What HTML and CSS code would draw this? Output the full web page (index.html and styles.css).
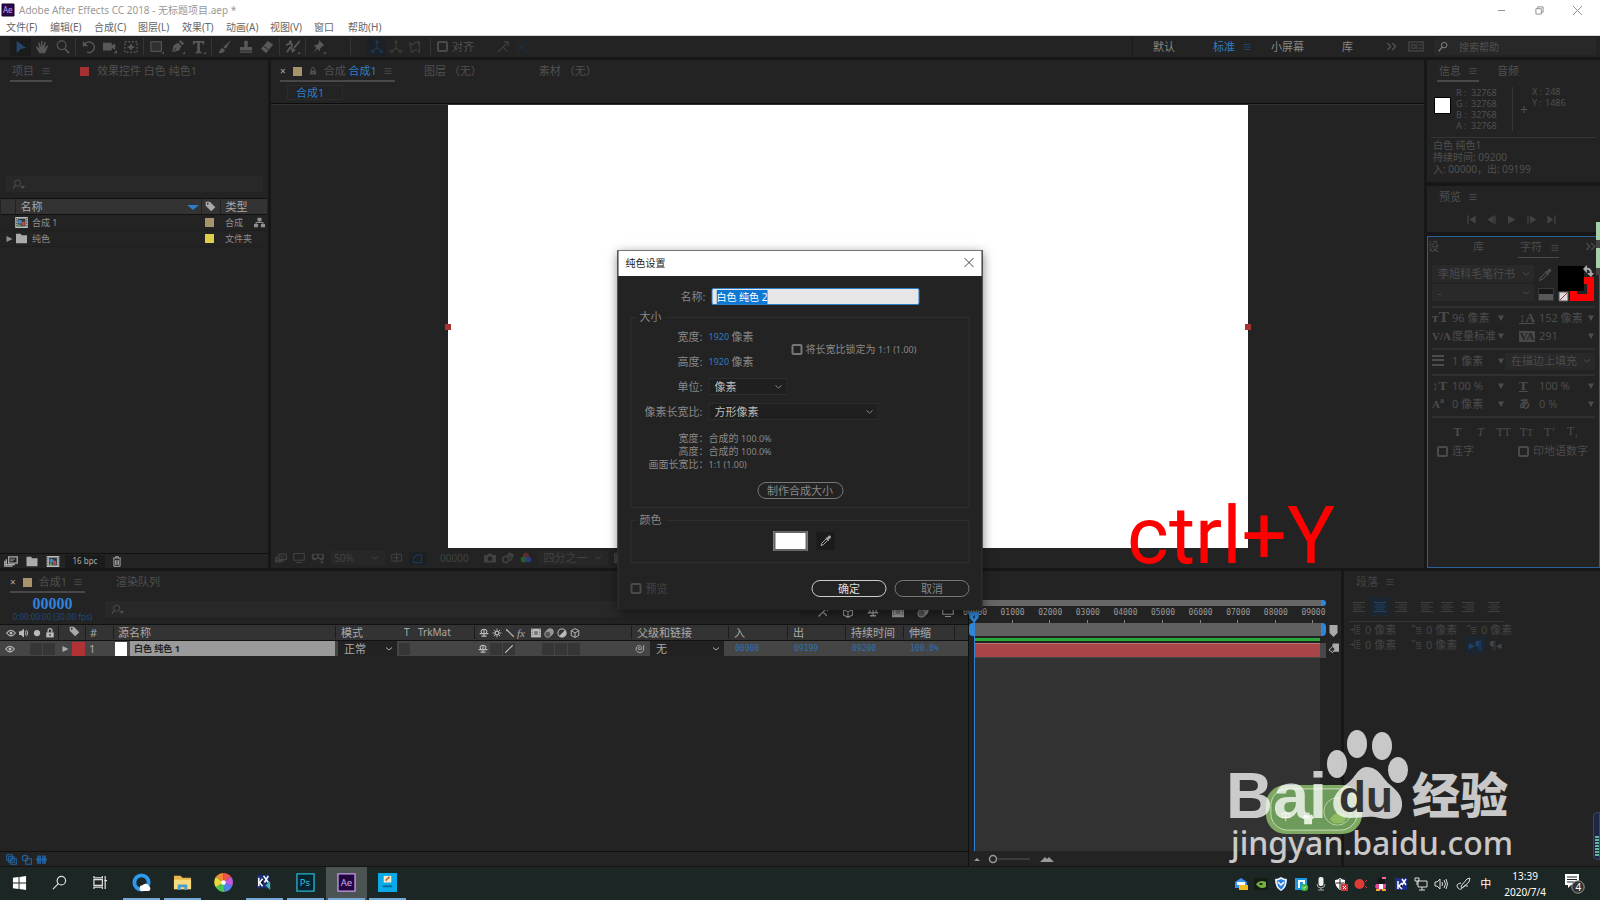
FILE: index.html
```html
<!DOCTYPE html>
<html lang="zh-CN">
<head>
<meta charset="utf-8">
<title>Adobe After Effects CC 2018 - 无标题项目.aep *</title>
<link rel="stylesheet" href="styles.css">
</head>
<body>
<svg class="defs" aria-hidden="true">
  <symbol id="burger" viewBox="0 0 16 16"><path d="M1 3h14M1 8h14M1 13h14" stroke="currentColor" stroke-width="1.6" fill="none"/></symbol>
  <symbol id="chev" viewBox="0 0 16 16"><path d="M2 5l6 5 6-5" stroke="currentColor" stroke-width="2" fill="none"/></symbol>
  <symbol id="more" viewBox="0 0 16 16"><path d="M2 3l5 5-5 5M9 3l5 5-5 5" stroke="currentColor" stroke-width="1.8" fill="none"/></symbol>
  <symbol id="tri" viewBox="0 0 16 16"><path d="M2 3h12l-6 11z" fill="currentColor"/></symbol>
  <symbol id="play" viewBox="0 0 16 16"><path d="M3 2l12 6-12 6z" fill="currentColor"/></symbol>
  <symbol id="lens" viewBox="0 0 16 16"><circle cx="9" cy="6" r="4" stroke="currentColor" stroke-width="1.4" fill="none"/><path d="M6 9l-5 6" stroke="currentColor" stroke-width="1.6"/></symbol>
  <symbol id="lensdrop" viewBox="0 0 20 16"><circle cx="8" cy="6" r="4.5" stroke="currentColor" stroke-width="1.3" fill="none"/><path d="M5 9l-4 5" stroke="currentColor" stroke-width="1.5"/><path d="M12 10h7l-3.500 4z" fill="currentColor"/></symbol>
  <symbol id="arrow" viewBox="0 0 16 16"><path d="M3 1l11 8-6 1-5 5z" fill="currentColor"/></symbol>
  <symbol id="hand" viewBox="0 0 16 16"><path d="M5 15L1 8l1.500-.5L5 10 3.500 3l1.400-.3L6.500 8 7 1h1.500l.3 7L11 2l1.400.5L11 9l3-3 1 .8L11.500 15z" fill="currentColor"/></symbol>
  <symbol id="zoom" viewBox="0 0 16 16"><circle cx="6.500" cy="6" r="5" stroke="currentColor" stroke-width="1.4" fill="none"/><path d="M10 10l5 5" stroke="currentColor" stroke-width="2"/></symbol>
  <symbol id="rotate" viewBox="0 0 16 16"><path d="M3 5a6 6 0 1 1 3 9" stroke="currentColor" stroke-width="1.7" fill="none"/><path d="M1 1v6h6z" fill="currentColor"/></symbol>
  <symbol id="camera" viewBox="0 0 16 16"><path d="M0 3h10v3l4-2v7l-4-2v3H0zM12 15h4v-4z" fill="currentColor"/></symbol>
  <symbol id="panb" viewBox="0 0 16 16"><rect x="1" y="2" width="14" height="12" stroke="currentColor" stroke-dasharray="2 2" stroke-width="1.5" fill="none"/><path d="M8 4l2 3 3 1-3 1-2 3-2-3-3-1 3-1z" fill="currentColor"/></symbol>
  <symbol id="rect" viewBox="0 0 16 16"><rect x="1" y="2" width="12" height="11" stroke="currentColor" stroke-width="1.2" fill="#303030"/><path d="M13 16h3v-3z" fill="currentColor"/></symbol>
  <symbol id="pen" viewBox="0 0 16 16"><path d="M1 14l2-8 5-3 4 4-3 5zM9 2l2-2 4 4-2 2zM13 16h3v-3z" fill="currentColor"/><path d="M2 13l4-4" stroke="#232323"/></symbol>
  <symbol id="type" viewBox="0 0 16 16"><path d="M1 1h13v4h-1.500l-.8-2H9v10l2 .6V15H4v-1.400l2-.6V3H3.300l-.8 2H1zM13 16h3v-3z" fill="currentColor"/></symbol>
  <symbol id="brush" viewBox="0 0 16 16"><path d="M15 0L9 10 6 8zM5 9l3 2.500C7 15 4 15 0 15c2-1 2-5 5-6z" fill="currentColor"/></symbol>
  <symbol id="stamp" viewBox="0 0 16 16"><path d="M6 8V4a2.300 2.300 0 1 1 4 0v4h5v4H1V8zM1 13h14v1.500H1z" fill="currentColor"/></symbol>
  <symbol id="eraser" viewBox="0 0 16 16"><path d="M1 10L9 1l6 4-8 10z" fill="currentColor"/><path d="M4 7l6 4" stroke="#232323"/></symbol>
  <symbol id="roto" viewBox="0 0 16 16"><circle cx="5" cy="2" r="1.800" fill="currentColor"/><path d="M0 6l4-2 3 1-1 4 2 5M5 8l-4 6M16 1L9 9" stroke="currentColor" stroke-width="2" fill="none"/><path d="M8 9l3 2-4 4zM13 16h3v-3z" fill="currentColor"/></symbol>
  <symbol id="pin" viewBox="0 0 16 16"><path d="M8 0l6 6-2 1-3 3v3L6 10l-5 5 4-6-3-3h3l3-3zM13 16h3v-3z" fill="currentColor"/></symbol>
  <symbol id="axis" viewBox="0 0 16 16"><path d="M8 1v8l-6 5M8 9l6 5M6 3l2-2 2 2M2 11v3h3M11 14h3v-3" stroke="currentColor" stroke-width="1.300" fill="none"/></symbol>
  <symbol id="axis2" viewBox="0 0 16 16"><path d="M2 3l3 3 3-3 5-1v12l-4-3-5 3zM2 3v3M10 2l3 4" stroke="currentColor" stroke-width="1.300" fill="none"/></symbol>
  <symbol id="snap" viewBox="0 0 16 16"><path d="M2 14l6-6 5 5M8 8l5-5M9 2h5v5" stroke="currentColor" stroke-width="1.500" fill="none"/></symbol>
  <symbol id="snap2" viewBox="0 0 16 16"><path d="M2 2l4 4M14 2l-4 4M2 14l4-4M14 14l-4-4M8 5v6M5 8h6" stroke="currentColor" stroke-width="1.500" stroke-dasharray="2 1" fill="none"/></symbol>
  <symbol id="wsicon" viewBox="0 0 18 12"><rect x="1" y="1" width="16" height="10" stroke="currentColor" stroke-width="1.800" fill="none"/><path d="M4 4h4v4H4zM10 3v6M12 4h3M12 8h3" stroke="currentColor" stroke-width="1.500" fill="none"/></symbol>
  <symbol id="lock" viewBox="0 0 16 16"><path d="M2 7h12v8H2z" fill="currentColor"/><path d="M5 7V4a3 3 0 0 1 6 0v3" stroke="currentColor" stroke-width="2" fill="none"/><circle cx="8" cy="11" r="1.400" fill="#333"/></symbol>
  <symbol id="tag" viewBox="0 0 16 16"><path d="M1 1h6l8 8-6 6-8-8z" fill="currentColor"/><circle cx="4" cy="4" r="1.300" fill="#333"/></symbol>
  <symbol id="comp" viewBox="0 0 16 14"><path d="M0 0h16v14H0z" fill="#bbb"/><path d="M3 2h10v10H3z" fill="#2c3840"/><circle cx="6" cy="6" r="2.600" fill="#4a86b8"/><path d="M8 6h4v5H8z" fill="#b85048"/><path d="M5 8l3 4H3z" fill="#63a060"/><path d="M1 2h1M1 5h1M1 8h1M1 11h1M14 2h1M14 5h1M14 8h1M14 11h1" stroke="#333" stroke-width="1.500"/></symbol>
  <symbol id="folder" viewBox="0 0 16 14"><path d="M1 1h6l1 2h7v10H1z" fill="currentColor"/></symbol>
  <symbol id="tree" viewBox="0 0 16 16"><path d="M5 1h6v5H5zM0 10h6v5H0zM10 10h6v5h-6z" fill="currentColor"/><path d="M8 6v2M3 10V8h10v2" stroke="currentColor" stroke-width="1.500" fill="none"/></symbol>
  <symbol id="footage" viewBox="0 0 18 14"><path d="M6 1h11v8H6zM3 4v7h11M1 6v7h10" stroke="currentColor" stroke-width="1.700" fill="none"/><path d="M8 4h6M8 6h4" stroke="currentColor"/></symbol>
  <symbol id="trash" viewBox="0 0 14 16"><path d="M1 3h12M5 3V1h4v2M2.500 4v11h9V4M5 6v7M7 6v7M9 6v7" stroke="currentColor" stroke-width="1.400" fill="none"/></symbol>
  <symbol id="eye" viewBox="0 0 16 12"><path d="M1 6q7-9 14 0-7 9-14 0z" stroke="currentColor" stroke-width="1.800" fill="none"/><circle cx="8" cy="6" r="2.400" fill="currentColor"/></symbol>
  <symbol id="spk" viewBox="0 0 16 16"><path d="M0 5h3l5-4v14l-5-4H0z" fill="currentColor"/><path d="M10 5q2 3 0 6M12 3q4 5 0 10" stroke="currentColor" stroke-width="1.500" fill="none"/></symbol>
  <symbol id="shy" viewBox="0 0 16 16"><path d="M3 6q1-4 5-4t5 4M1 9h14M8 1v13M4 6v3M12 6v3M4 13h8" stroke="currentColor" stroke-width="1.800" fill="none"/></symbol>
  <symbol id="sun" viewBox="0 0 16 16"><circle cx="8" cy="8" r="3" stroke="currentColor" stroke-width="2" fill="none"/><path d="M8 1v3M8 12v3M1 8h3M12 8h3M3 3l2 2M11 11l2 2M3 13l2-2M11 5l2-2" stroke="currentColor" stroke-width="1.500"/></symbol>
  <symbol id="slash" viewBox="0 0 16 16"><path d="M2 14L14 2" stroke="currentColor" stroke-width="1.800"/></symbol>
  <symbol id="bslash" viewBox="0 0 16 16"><path d="M2 2l12 12M2 3l2 2" stroke="currentColor" stroke-width="1.800"/></symbol>
  <symbol id="film" viewBox="0 0 16 16"><path d="M0 1h16v14H0z" fill="currentColor"/><path d="M2 2v12M14 2v12" stroke="#333" stroke-dasharray="2 2"/><path d="M5 5h6v6H5z" fill="#777"/></symbol>
  <symbol id="blur" viewBox="0 0 16 16"><circle cx="10" cy="6" r="5" fill="#888" stroke="currentColor"/><circle cx="8" cy="8" r="5" fill="#777" stroke="currentColor"/><circle cx="6" cy="10" r="5" fill="#555" stroke="currentColor"/></symbol>
  <symbol id="snapshot" viewBox="0 0 16 16"><circle cx="5" cy="10" r="4" stroke="currentColor" stroke-width="2" fill="none"/><path d="M6 6l4-4 5 2-4 8" stroke="currentColor" stroke-width="2" fill="none"/><circle cx="11" cy="5" r="2" fill="currentColor"/></symbol>
  <symbol id="adj" viewBox="0 0 16 16"><circle cx="8" cy="8" r="6.500" fill="#333" stroke="currentColor" stroke-width="1.600"/><path d="M12.600 3.400A6.500 6.500 0 0 1 3.400 12.600z" fill="currentColor"/></symbol>
  <symbol id="cube" viewBox="0 0 16 16"><path d="M8 1l6 3v8l-6 3-6-3V4zM2 4l6 4 6-4M8 8v7" stroke="currentColor" stroke-width="1.500" fill="none"/></symbol>
  <symbol id="spiral" viewBox="0 0 16 16"><path d="M9 8a1.500 1.500 0 1 0-2 1.500C11 11 12 8 11 6 9 2 3 4 3 9c0 6 11 7 11 0V3" stroke="currentColor" stroke-width="1.400" fill="none"/></symbol>
  <symbol id="drop" viewBox="0 0 16 16"><path d="M2 14l1-3 6-6 2 2-6 6z" stroke="currentColor" stroke-width="1.300" fill="none"/><path d="M8 4l1-1 1 1 2-3q4-1 3 3l-3 2 1 1-1 1z" fill="currentColor"/></symbol>
  <symbol id="al" viewBox="0 0 16 16"><path d="M0 2h16M0 5h11M0 8h16M0 11h11M0 14h16" stroke="currentColor" stroke-width="1.200"/></symbol>
  <symbol id="ac" viewBox="0 0 16 16"><path d="M0 2h16M3 5h10M0 8h16M3 11h10M0 14h16" stroke="currentColor" stroke-width="1.200"/></symbol>
  <symbol id="ar" viewBox="0 0 16 16"><path d="M0 2h16M5 5h11M0 8h16M5 11h11M0 14h16" stroke="currentColor" stroke-width="1.200"/></symbol>
  <symbol id="ind" viewBox="0 0 16 16"><path d="M7 1v14M9 2h6M9 5h5M9 8h6M9 11h5M9 14h6M0 8h5M3 6l2 2-2 2" stroke="currentColor" stroke-width="1.200" fill="none"/></symbol>
  <symbol id="ind2" viewBox="0 0 16 16"><path d="M0 3h6M4 1l2 2-2 2M8 5h6v3H8zM8 11h7M8 14h7" stroke="currentColor" stroke-width="1.200" fill="none"/></symbol>
  <symbol id="photo" viewBox="0 0 16 14"><path d="M0 3h4l2-2h4l2 2h4v10H0z" fill="currentColor"/><circle cx="8" cy="8" r="3" fill="#232323"/></symbol>
  <symbol id="screen" viewBox="0 0 16 14"><path d="M1 1h14v9H1zM4 13h8" stroke="currentColor" stroke-width="1.500" fill="none"/></symbol>
  <symbol id="goggle" viewBox="0 0 16 14"><path d="M1 2h14v6l-3 2-3-2H7L4 10 1 8z" fill="currentColor"/><circle cx="5" cy="5" r="2" fill="#232323"/><circle cx="11" cy="5" r="2" fill="#232323"/><path d="M10 11h5l-2.500 3z" fill="currentColor"/></symbol>
  <symbol id="gridi" viewBox="0 0 16 14"><path d="M1 2h13v9H1zM7.500 0v13M4 6.500h7" stroke="currentColor" stroke-width="1.300" fill="none"/></symbol>
</svg>

<header class="titlebar">
  <svg class="aelogo" viewBox="0 0 12 12"><path fill="#2a0a4a" stroke="#150329" d="M0 0h12v12H0z"/><text x="1" y="9" font-size="8" fill="#c9a6f5">Ae</text></svg>
  <h1>Adobe After Effects CC 2018 - 无标题项目.aep *</h1>
  <div class="winbtns">
    <button aria-label="最小化"><svg viewBox="0 0 10 10"><path d="M1 5h8"/></svg></button>
    <button aria-label="还原"><svg viewBox="0 0 10 10"><path d="M1 3h6v6H1zM3 3V1h6v6H7"/></svg></button>
    <button aria-label="关闭"><svg viewBox="0 0 10 10"><path d="M0 0l10 10M10 0L0 10"/></svg></button>
  </div>
</header>
<nav class="menubar">
  <button>文件(F)</button><button>编辑(E)</button><button>合成(C)</button><button>图层(L)</button><button>效果(T)</button><button>动画(A)</button><button>视图(V)</button><button class="narrow">窗口</button><button>帮助(H)</button>
</nav>

<div class="toolbar">
  <button class="tool on" aria-label="选取"><svg><use href="#arrow"/></svg></button>
  <button class="tool" aria-label="手形"><svg><use href="#hand"/></svg></button>
  <button class="tool" aria-label="缩放"><svg><use href="#zoom"/></svg></button><i class="sep"></i>
  <button class="tool" aria-label="旋转"><svg><use href="#rotate"/></svg></button>
  <button class="tool" aria-label="摄像机"><svg><use href="#camera"/></svg></button>
  <button class="tool" aria-label="锚点"><svg><use href="#panb"/></svg></button><i class="sep"></i>
  <button class="tool" aria-label="矩形"><svg><use href="#rect"/></svg></button>
  <button class="tool" aria-label="钢笔"><svg><use href="#pen"/></svg></button>
  <button class="tool" aria-label="文字"><svg><use href="#type"/></svg></button><i class="sep"></i>
  <button class="tool" aria-label="画笔"><svg><use href="#brush"/></svg></button>
  <button class="tool" aria-label="图章"><svg><use href="#stamp"/></svg></button>
  <button class="tool" aria-label="橡皮擦"><svg><use href="#eraser"/></svg></button><i class="sep"></i>
  <button class="tool" aria-label="Roto"><svg><use href="#roto"/></svg></button><i class="sep"></i>
  <button class="tool" aria-label="操控"><svg><use href="#pin"/></svg></button><i class="sep far"></i>
  <button class="tool axis on" aria-label="本地轴"><svg><use href="#axis"/></svg></button>
  <button class="tool dim" aria-label="世界轴"><svg><use href="#axis"/></svg></button>
  <button class="tool dim" aria-label="视图轴"><svg><use href="#axis2"/></svg></button><i class="sep wide"></i>
  <label class="check dimtext"><input type="checkbox">对齐</label>
  <button class="tool dim snap" aria-label="对齐边缘"><svg><use href="#snap"/></svg></button>
  <button class="tool dim blue" aria-label="对齐特征"><svg><use href="#snap2"/></svg></button>
  <div class="workspaces">
    <button>默认</button><button class="cur">标准 <svg class="i8"><use href="#burger"/></svg></button><button>小屏幕</button><button>库</button>
    <button aria-label="更多" class="morebtn"><svg class="i11"><use href="#more"/></svg></button>
    <svg class="wsicon"><use href="#wsicon"/></svg>
    <label class="helpsearch"><svg class="i11"><use href="#lens"/></svg><input type="search" placeholder="搜索帮助" aria-label="搜索帮助"></label>
  </div>
</div>

<main class="work">
  <div class="upper">
    <section class="panel project">
      <div class="tabs"><span class="tab active">项目<svg class="i8"><use href="#burger"/></svg></span><span class="tab fx"><i class="sw red"></i>效果控件 白色 纯色1</span></div>
      <div class="space"></div>
      <label class="search"><svg class="ld"><use href="#lensdrop"/></svg><input type="text" aria-label="搜索项目"></label>
      <table class="ptable">
        <colgroup><col class="c1"><col class="c2"><col class="c3"><col></colgroup>
        <thead><tr><th></th><th><span class="between">名称<svg class="sortarrow" viewBox="0 0 12 6"><path d="M0 1h12L6 6z" fill="#2d7cc8"/></svg></span></th><th><svg class="i11"><use href="#tag"/></svg></th><th>类型</th></tr></thead>
        <tbody>
          <tr><td></td><td><span class="nm"><svg class="pi"><use href="#comp"/></svg>合成 1</span></td><td><i class="sw tan"></i></td><td><span class="between">合成<svg class="i11"><use href="#tree"/></svg></span></td></tr>
          <tr><td><svg class="i8"><use href="#play"/></svg></td><td><span class="nm"><svg class="pi"><use href="#folder"/></svg>纯色</span></td><td><i class="sw yellow"></i></td><td>文件夹</td></tr>
        </tbody>
      </table>
      <div class="pfoot">
        <button aria-label="解释素材"><svg><use href="#footage"/></svg></button><button aria-label="新建文件夹"><svg><use href="#folder"/></svg></button><button aria-label="新建合成"><svg><use href="#comp"/></svg></button><button class="bpc">16 bpc</button><button aria-label="删除"><svg><use href="#trash"/></svg></button>
      </div>
    </section>

    <section class="panel viewer">
      <div class="tabs"><span class="tab active comp"><b>×</b><i class="sw tan"></i><svg class="i8"><use href="#lock"/></svg><span>合成 <em>合成1</em></span><svg class="i8"><use href="#burger"/></svg></span><span class="tab t2">图层 （无）</span><span class="tab t3">素材 （无）</span></div>
      <div class="crumbs"><button>合成1</button></div>
      <div class="stage"><i class="handle"></i><div class="canvas"></div><i class="handle"></i></div>
      <div class="vfoot">
        <svg class="i12"><use href="#footage"/></svg><svg class="i12"><use href="#screen"/></svg><svg class="i14"><use href="#goggle"/></svg>
        <span class="dd z">50%<svg class="i8"><use href="#chev"/></svg></span>
        <svg class="i12"><use href="#gridi"/></svg><span class="maskbtn"><svg class="i11" viewBox="0 0 16 16"><path d="M2 14V7l5-4h7v11z" stroke="currentColor" stroke-width="1.500" fill="none"/></svg></span>
        <span class="tc">00000</span>
        <svg class="i12"><use href="#photo"/></svg><svg class="i12"><use href="#snapshot"/></svg>
        <svg class="i12" viewBox="0 0 16 16"><circle cx="8" cy="5" r="4" fill="#602c2c"/><circle cx="5" cy="10" r="4" fill="#285c30"/><circle cx="11" cy="10" r="4" fill="#2a3c78"/></svg>
        <span class="dd q">四分之一<svg class="i8"><use href="#chev"/></svg></span><svg class="i12"><use href="#film"/></svg>
      </div>
    </section>

    <aside class="side">
      <section class="panel info">
        <div class="tabs"><span class="tab active">信息<svg class="i8"><use href="#burger"/></svg></span><span class="tab">音频</span></div>
        <div class="inforow"><i class="bigsw"></i>
          <dl class="rgba"><dt>R :</dt><dd>32768</dd><dt>G :</dt><dd>32768</dd><dt>B :</dt><dd>32768</dd><dt>A :</dt><dd>32768</dd></dl>
          <span class="plus">+</span><dl class="xy"><dt>X :</dt><dd>248</dd><dt>Y :</dt><dd>1486</dd></dl></div>
        <p class="infotext">白色 纯色1<br>持续时间: 09200<br>入: 00000，出: 09199</p>
      </section>
      <section class="panel preview">
        <div class="tabs"><span class="tab">预览<svg class="i8"><use href="#burger"/></svg></span></div>
        <div class="transport">
          <button aria-label="首帧"><svg viewBox="0 0 16 16"><path d="M2 2h2v12H2zM14 2v12L5 8z"/></svg></button><button aria-label="上一帧"><svg viewBox="0 0 16 16"><path d="M11 2v12L2 8zM12 2h2v12h-2z"/></svg></button><button aria-label="播放"><svg viewBox="0 0 16 16"><path d="M3 2l11 6-11 6z"/></svg></button><button aria-label="下一帧"><svg viewBox="0 0 16 16"><path d="M2 2h2v12H2zM6 2l9 6-9 6z"/></svg></button><button aria-label="末帧"><svg viewBox="0 0 16 16"><path d="M2 2l9 6-9 6zM12 2h2v12h-2z"/></svg></button>
        </div>
      </section>
      <section class="panel character">
        <div class="ctabs"><span>设</span><span class="lib">库</span><span class="act">字符<svg class="i8"><use href="#burger"/></svg></span><svg class="i11"><use href="#more"/></svg></div>
        <div class="fontbox">
          <div class="fsel"><label class="sel"><select aria-label="字体"><option>李旭科毛笔行书</option></select><svg class="i8"><use href="#chev"/></svg></label><label class="sel"><select aria-label="样式"><option>-</option></select><svg class="i8"><use href="#chev"/></svg></label></div>
          <div class="mid"><svg class="i14"><use href="#drop"/></svg><i class="bw"></i></div>
          <svg class="fillstroke" viewBox="0 0 38 38"><path d="M12 13h24v24H12zM19 20v10h10V20z" fill="#f00" fill-rule="evenodd"/><path d="M0 2h26v25H0z" fill="#000"/><path d="M1 28h9v9H1z" fill="#ddd" stroke="#555"/><path d="M2 36l7-7" stroke="#a33"/><path d="M28 5q5-1 5 5" stroke="#aaa" stroke-width="2" fill="none"/><path d="M29 1v8l-4-4zM29 9h7l-3 4z" fill="#aaa"/></svg>
        </div>
        <div class="crow l"><b class="g">т<big>T</big></b><span>96 像素</span><svg class="i8"><use href="#tri"/></svg><b class="g u">↕A</b><span>152 像素</span><svg class="i8"><use href="#tri"/></svg></div>
        <div class="crow"><b class="g s">V/A</b><span>度量标准</span><svg class="i8"><use href="#tri"/></svg><b class="g inv">VA</b><span>291</span><svg class="i8"><use href="#tri"/></svg></div>
        <div class="crow l w"><svg class="i12 stroke" viewBox="0 0 12 12"><path d="M0 1h12M0 5h12M0 10h12" stroke="currentColor" stroke-width="2"/></svg><span>1 像素</span><svg class="i8"><use href="#tri"/></svg><label class="sel"><select aria-label="描边方式"><option>在描边上填充</option></select><svg class="i8"><use href="#chev"/></svg></label></div>
        <div class="crow l"><b class="g">↕T</b><span>100 %</span><svg class="i8"><use href="#tri"/></svg><b class="g u">T</b><span>100 %</span><svg class="i8"><use href="#tri"/></svg></div>
        <div class="crow"><b class="g s">A<sup>a</sup></b><span>0 像素</span><svg class="i8"><use href="#tri"/></svg><b class="g s">あ</b><span>0 %</span><svg class="i8"><use href="#tri"/></svg></div>
        <div class="styles"><button class="bd">T</button><button><i>T</i></button><button>TT</button><button>T<small>T</small></button><button>T<sup>1</sup></button><button>T<sub>1</sub></button></div>
        <div class="opts"><label class="check"><input type="checkbox">连字</label><label class="check"><input type="checkbox">印地语数字</label></div>
      </section>
    </aside>
  </div>

  <div class="lower">
    <section class="panel timeline">
      <div class="layers">
        <div class="tabs"><span class="tab active comp"><b>×</b><i class="sw tan"></i><span>合成1</span><svg class="i8"><use href="#burger"/></svg></span><span class="tab rq">渲染队列</span></div>
        <div class="timerow"><div class="time"><strong>00000</strong><small>0:00:00:00 (30.00 fps)</small></div>
          <label class="search"><svg class="ld"><use href="#lensdrop"/></svg><input type="text" aria-label="搜索图层"></label>
          <div class="tlbtns"><svg><use href="#snap"/></svg><svg><use href="#cube"/></svg><svg><use href="#shy"/></svg><svg><use href="#film"/></svg><svg><use href="#blur"/></svg><svg><use href="#screen"/></svg></div></div>
        <div class="lgrid lhead">
          <span class="sws"><svg><use href="#eye"/></svg><svg><use href="#spk"/></svg><svg viewBox="0 0 16 16"><circle cx="8" cy="8" r="5" fill="currentColor"/></svg><svg><use href="#lock"/></svg></span>
          <span class="tg"><svg class="i11"><use href="#tag"/></svg></span><span class="no">#</span><span class="src">源名称</span><span>模式</span><span class="t">T</span><span>TrkMat</span>
          <span class="sws"><svg><use href="#shy"/></svg><svg><use href="#sun"/></svg><svg><use href="#bslash"/></svg><i class="fxi">fx</i><svg><use href="#film"/></svg><svg><use href="#blur"/></svg><svg><use href="#adj"/></svg><svg><use href="#cube"/></svg></span>
          <span>父级和链接</span><span>入</span><span>出</span><span>持续时间</span><span>伸缩</span><span></span>
        </div>
        <div class="lgrid lrow">
          <span class="sws"><svg><use href="#eye"/></svg><i></i><i class="dk"></i><i class="dk"></i></span>
          <span class="tg2"><svg class="i8"><use href="#play"/></svg><i class="redbox"></i></span><span class="no">1</span>
          <span class="lname"><i></i><b>白色 纯色 1</b></span>
          <label class="sel m"><select aria-label="模式"><option>正常</option></select><svg class="i8"><use href="#chev"/></svg></label>
          <span class="t"><i class="dk"></i></span><span></span>
          <span class="sws"><svg><use href="#shy"/></svg><i class="dk"></i><svg class="dk"><use href="#slash"/></svg><i></i><i></i><i class="dk"></i><i class="dk"></i><i class="dk"></i></span>
          <span class="par"><svg class="i11"><use href="#spiral"/></svg><label class="sel"><select aria-label="父级"><option>无</option></select><svg class="i8"><use href="#chev"/></svg></label></span>
          <span class="v">00000</span><span class="v">09199</span><span class="v">09200</span><span class="v">100.0%</span><span></span>
        </div>
        <div class="grow"></div>
        <div class="lfoot"><svg viewBox="0 0 16 16"><path d="M1 1h8v8H1zM4 4h8v8H4zM7 7h8v8H7z"/></svg><svg viewBox="0 0 16 16"><circle cx="6" cy="6" r="4"/><path d="M7 7h8v8H7z"/></svg><svg viewBox="0 0 16 16"><path d="M3 2v12M6 2v12M10 2v12M13 2v12M0 8h16" stroke-width="2.500"/></svg></div>
      </div>
      <div class="graph">
        <div class="navbar"></div>
        <ol class="ruler"><li><span>00000</span></li><li><span>01000</span></li><li><span>02000</span></li><li><span>03000</span></li><li><span>04000</span></li><li><span>05000</span></li><li><span>06000</span></li><li><span>07000</span></li><li><span>08000</span></li><li><span>09000</span></li></ol>
        <div class="workarea"></div>
        <div class="cache"></div>
        <div class="track"><i></i></div>
        <div class="tbody"></div>
        <div class="zoomrow"><svg viewBox="0 0 84 10"><path d="M0 7l3-3 3 3zM66 8l5-5 2 2 2-2 5 5z" fill="#999"/><path d="M24 5h32" stroke="#555"/><circle cx="19" cy="5" r="3.500" fill="none" stroke="#999" stroke-width="1.500"/></svg></div>
        <svg class="playhead" viewBox="0 0 10 12"><path d="M0 0h10v6l-5 6-5-6z" fill="#2f86d8"/><path d="M4 4h2v3H4z" fill="#153a60"/></svg>
      </div>
      <div class="edge"><svg viewBox="0 0 10 12"><path d="M1 0h8v8l-4 4-4-4z" fill="#aaa"/></svg><svg viewBox="0 0 12 12"><path d="M5 0h7v9H5z" fill="#aaa"/><path d="M1 7l4-4 3 3-3 4z" fill="#333" stroke="#bbb"/></svg></div>
    </section>
    <section class="panel paragraph">
      <div class="tabs"><span class="tab">段落<svg class="i8"><use href="#burger"/></svg></span></div>
      <div class="aligns"><button aria-label="左对齐"><svg><use href="#al"/></svg></button><button class="on" aria-label="居中"><svg><use href="#ac"/></svg></button><button aria-label="右对齐"><svg><use href="#ar"/></svg></button><button class="gap" aria-label="末行左"><svg><use href="#al"/></svg></button><button aria-label="末行中"><svg><use href="#ac"/></svg></button><button aria-label="末行右"><svg><use href="#ar"/></svg></button><button class="gap" aria-label="两端"><svg><use href="#ac"/></svg></button></div>
      <div class="indents"><span><svg><use href="#ind"/></svg>0 像素</span><span><svg><use href="#ind2"/></svg>0 像素</span><span><svg><use href="#ind2"/></svg>0 像素</span><span><svg><use href="#ind"/></svg>0 像素</span><span><svg><use href="#ind2"/></svg>0 像素</span><span class="dir"><b>▸¶</b>¶◂</span></div>
    </section>
  </div>
</main>

<footer class="taskbar">
  <button aria-label="开始"><svg viewBox="0 0 16 16"><path d="M1 3l6-1v6H1zM8 2l7-1v7H8zM1 9h6v6l-6-1zM8 9h7v7l-7-1z" fill="#fff"/></svg></button>
  <button aria-label="搜索"><svg viewBox="0 0 16 16"><circle cx="10" cy="6" r="4.500" stroke="#ddd" stroke-width="1.300" fill="none"/><path d="M7 9l-6 6" stroke="#ddd" stroke-width="1.300"/></svg></button>
  <button aria-label="任务视图"><svg viewBox="0 0 16 16"><path d="M1 1v2h9V1M1 15v-2h9v2M1 5h9v6H1zM13 1v14M12 6h3" stroke="#ddd" stroke-width="1.300" fill="none"/></svg></button>
  <button class="run" aria-label="QQ浏览器"><svg class="lg" viewBox="0 0 20 20"><circle cx="10" cy="10" r="7.500" fill="none" stroke="#2d9af0" stroke-width="4"/><path d="M11 19a3 3 0 0 1 0-6 4 4 0 0 1 7 1 3 3 0 0 1 0 5z" fill="#fff"/></svg></button>
  <button class="run" aria-label="资源管理器"><svg class="lg" viewBox="0 0 20 20"><path d="M1 3h7l2 2h9v12H1z" fill="#e8b64a"/><path d="M1 7h18v10H1z" fill="#f9da7c"/><path d="M5 18v-6h10v6h-3v-3H8v3z" fill="#4a9cd0"/></svg></button>
  <button aria-label="2345看图"><svg class="lg" viewBox="0 0 20 20"><path d="M10 10V0a10 10 0 0 1 8 4z" fill="#f2554a"/><path d="M10 10l8-6a10 10 0 0 1 1 10z" fill="#c05adf"/><path d="M10 10l9 4a10 10 0 0 1-8 6z" fill="#4e86ee"/><path d="M10 10l1 10a10 10 0 0 1-9-5z" fill="#46c850"/><path d="M10 10l-8 5A10 10 0 0 1 2 4z" fill="#e9d83b"/><path d="M10 10L2 4a10 10 0 0 1 8-4z" fill="#f58a34"/><circle cx="10" cy="10" r="2.500" fill="#fff"/></svg></button>
  <button class="run" aria-label="KX"><svg class="lg" viewBox="0 0 20 20"><path d="M2 2h13v14H2z" fill="#1b2f74"/><path d="M4 5v9M8 6l-3 4 3 4M9 3l5 7M14 3l-4 7" stroke="#fff" stroke-width="1.600"/><path d="M11 13l5-4v9z" fill="#47b7b7"/></svg></button>
  <button class="run" aria-label="Photoshop"><svg class="lg" viewBox="0 0 20 20"><path d="M1 1h18v18H1z" fill="#06222e" stroke="#25b4cf" stroke-width="1.400"/><text x="4" y="14" font-size="10" fill="#2fc4df">Ps</text></svg></button>
  <button class="run cur" aria-label="After Effects"><svg class="lg" viewBox="0 0 20 20"><path d="M1 1h18v18H1z" fill="#210640" stroke="#c79be8" stroke-width="1.400"/><text x="4" y="14" font-size="10" fill="#cfa7f0">Ae</text></svg></button>
  <button class="run" aria-label="画板"><svg class="lg" viewBox="0 0 20 20"><path d="M0 0h20v20H0z" fill="#0aa9e8"/><path d="M6 3h8v7H6z" fill="#f3ead2"/><path d="M8 8l4-4" stroke="#c7762a" stroke-width="2"/><path d="M5 14h10" stroke="#086b98" stroke-width="2"/></svg></button>
  <div class="tray">
    <svg viewBox="0 0 14 14"><path d="M1 5l6-4 6 4v6H1z" fill="#3a93e8"/><path d="M3 5h8v3H3z" fill="#fff"/><path d="M5 8h9v5H5z" fill="#f0bd20"/></svg>
    <svg viewBox="0 0 14 14"><path d="M0 1h14v12H0z" fill="#151b12"/><path d="M2 7q4-5 10-2v5q-6 3-10-3zM5 7q2-2 4 0-2 2-4 0z" fill="#76b043" fill-rule="evenodd"/></svg>
    <svg viewBox="0 0 14 14"><path d="M7 0q3 2 6 2 0 9-6 12Q1 11 1 2q3 0 6-2z" fill="#e8f2ff"/><path d="M7 2q2 1 4 1.500 0 6-4 9-4-3-4-9Q5 3 7 2z" fill="#2b7de0"/><path d="M4 5l3 3 3-3" stroke="#fff" stroke-width="1.500" fill="none"/></svg>
    <svg viewBox="0 0 14 14"><path d="M1 1h12v12H1z" fill="#1f97e0"/><path d="M5 11V4h5v3" stroke="#fff" stroke-width="2" fill="none"/><circle cx="10.500" cy="10.500" r="3.500" fill="#3fbe42"/><path d="M9 10.500l1 1 2-2" stroke="#fff" fill="none"/></svg>
    <svg viewBox="0 0 14 14"><rect x="4.500" y="0" width="5" height="9" rx="2" fill="#eee"/><path d="M3 7q0 4 4 4t4-4M7 11v2M4 13h6" stroke="#aaa" fill="none"/></svg>
    <svg viewBox="0 0 14 14"><path d="M6 1q3 2 5 2 0 7-5 10Q1 10 1 3q3 0 5-2z" fill="#fff"/><path d="M6 2v10M2 6h8" stroke="#222"/><path d="M7 7h7v7H7z" fill="#d3373a"/><path d="M9 9l3 3M12 9l-3 3" stroke="#fff"/></svg>
    <svg viewBox="0 0 14 14"><circle cx="5.500" cy="7" r="5" fill="#e03a35"/><path d="M11 5l2-2M11 9l2 2" stroke="#e03a35"/></svg>
    <svg viewBox="0 0 14 14"><circle cx="7" cy="4" r="3.500" fill="#151515"/><path d="M2 7h10v3l-2 3H4l-3-3z" fill="#e3479b"/><path d="M5 7h4v5H5z" fill="#fff"/><path d="M2 12h4v2H2zM8 12h4v2H8z" fill="#f2ac2a"/><path d="M8 0h4v2H8z" fill="#f06aa8"/></svg>
    <svg viewBox="0 0 14 14"><path d="M1 1h12v12H1z" fill="#1e2e88"/><path d="M4 4v8M8 6l-3 3 3 3M8 2l4 6M12 2L8 8" stroke="#fff" stroke-width="1.500"/></svg>
    <svg viewBox="0 0 14 14"><path d="M4 4h9v6H4zM8 10v3M5 13h6M1 1h4v3H1zM3 4v4" stroke="#ddd" fill="none"/></svg>
    <svg viewBox="0 0 14 14"><path d="M1 5h2l3-3v10L3 9H1zM8 5q1 2 0 4M10 3q3 4 0 8M12 2q3 5 0 10" stroke="#ddd" fill="none"/></svg>
    <svg class="ink" viewBox="0 0 14 14"><path d="M4 9l6-7 3-1-1 4-7 6zM4 6q-6 1-3 5 3 3 5-1 2-2 5-1" stroke="#ddd" fill="none"/></svg>
    <span class="ime">中</span>
    <time>13:39<br>2020/7/4</time>
    <svg class="note" viewBox="0 0 20 20"><path d="M0 0h14v11H6l-3 3v-3H0z" fill="#fff"/><path d="M2 3h10M2 5.500h10M2 8h7" stroke="#222"/><circle cx="13" cy="13" r="6.200" fill="#333" stroke="#999"/><text x="10.500" y="17" font-size="10" fill="#fff">4</text></svg>
  </div>
</footer>

<div class="annotation">ctrl+Y</div>
<svg class="ime-pill" viewBox="0 0 100 52"><rect x="1" y="1" width="98" height="50" rx="20" fill="#7fa862"/><rect x="6" y="5" width="88" height="42" rx="17" fill="#6d9b5c" stroke="#c8dcb2"/><circle cx="74" cy="28" r="14" fill="none" stroke="#b8d09c"/><path d="M66 36q8-12 18-4l-4 8H70z" fill="#8fbc62"/><path d="M40 31l4 1 4-1 2 4-2 1v5h-8v-5l-2-1z" fill="#e4eedd"/><text x="16" y="37" font-size="10" fill="#e4eedd">中</text></svg>
<svg class="watermark" viewBox="1224 725 292 145">
  <g fill="#fff" opacity=".75"><text class="wl" x="1226" y="818">Bai</text><ellipse cx="1337" cy="764" rx="10" ry="14"/><ellipse cx="1357" cy="744" rx="10" ry="14"/><ellipse cx="1382" cy="746" rx="10" ry="14"/><ellipse cx="1398" cy="770" rx="10" ry="13"/><path d="M1367 767c11 0 15 10 21 16 8 7 15 12 14 23-2 15-15 14-27 11-9-1-15 1-25 1-17 0-19-15-15-22 4-8 12-11 18-18 4-5 7-11 14-11z"/><text class="wc" x="1412" y="813">经验</text><text class="wu" x="1231" y="855">jingyan.baidu.com</text></g>
  <text class="wd" x="1339" y="812">du</text>
</svg>
<div class="meter"></div>
<div class="peek"></div>

<form class="dialog" role="dialog" aria-labelledby="dt">
  <div class="dtitle"><h2 id="dt">纯色设置</h2><button type="button" aria-label="关闭"><svg viewBox="0 0 10 10"><path d="M0 0l10 10M10 0L0 10"/></svg></button></div>
  <div class="dbody">
    <div class="drow name"><label for="nm">名称:</label><span class="inp"><input id="nm" type="text" value="白色 纯色 2"></span></div>
    <fieldset class="size"><legend>大小</legend>
      <div class="dims"><div>
        <div class="drow"><label for="w">宽度:</label><input class="num" id="w" value="1920"><span>像素</span></div>
        <div class="drow"><label for="h">高度:</label><input class="num" id="h" value="1920"><span>像素</span></div></div>
        <label class="check lockr"><input type="checkbox"><span>将长宽比锁定为 <small>1:1 (1.00)</small></span></label></div>
      <div class="drow"><label for="u">单位:</label><span class="sel s1"><select id="u"><option>像素</option></select><svg class="i8"><use href="#chev"/></svg></span></div>
      <div class="drow"><label for="p">像素长宽比:</label><span class="sel s2"><select id="p"><option>方形像素</option></select><svg class="i8"><use href="#chev"/></svg></span></div>
      <dl class="sum"><dt>宽度：</dt><dd>合成的 <small>100.0%</small></dd><dt>高度：</dt><dd>合成的 <small>100.0%</small></dd><dt>画面长宽比：</dt><dd><small>1:1 (1.00)</small></dd></dl>
      <button type="button" class="pill mk">制作合成大小</button>
    </fieldset>
    <fieldset class="color"><legend>颜色</legend><button type="button" class="csw" aria-label="颜色"></button><button type="button" class="pick" aria-label="吸管"><svg class="i12"><use href="#drop"/></svg></button></fieldset>
    <div class="dfoot"><label class="check off"><input type="checkbox" disabled>预览</label><button type="button" class="pill ok">确定</button><button type="button" class="pill">取消</button></div>
  </div>
</form>
<script src="main.js"></script>
</body>
</html>
```
FILE: main.js
```js
const nameField = document.getElementById('nm');
nameField.focus();
nameField.select();
```
FILE: styles.css
```css
* { box-sizing: border-box; }
body { margin: 0; height: 100vh; display: flex; flex-direction: column; overflow: hidden; position: relative; background: #171717; color: #505050; font: 11px/14px "Noto Sans", "Noto Sans CJK SC", sans-serif; }
button, input, select { font: inherit; color: inherit; background: none; border: 0; padding: 0; margin: 0; outline: 0; white-space: nowrap; }
select { appearance: none; }
svg { display: block; flex: none; overflow: visible; }
h1, h2, p, dl, dd, ol, fieldset { margin: 0; padding: 0; }
em, i { font-style: normal; }
.defs { position: absolute; width: 0; height: 0; }
.i8 { width: 8px; height: 8px; }
.i11 { width: 11px; height: 11px; }
.i12 { width: 12px; height: 12px; }
.i14 { width: 14px; height: 14px; }

.titlebar { height: 18px; flex: none; background: #fff; display: flex; align-items: center; padding: 2px 4px 0 2px; color: #999; }
.aelogo { width: 12px; height: 12px; }
.titlebar h1 { font-size: 10px; font-weight: 400; margin-left: 5px; flex: 1; }
.winbtns { display: flex; }
.winbtns button { width: 38px; display: flex; justify-content: center; }
.winbtns svg { width: 9px; height: 9px; fill: none; stroke: #888; }
.menubar { height: 18px; flex: none; background: #fff; border-bottom: 1px solid #d8d8d8; display: flex; padding-left: 6px; color: #666; font-size: 10px; }
.menubar button { width: 44px; text-align: left; }
.menubar .narrow { width: 34px; }

.toolbar { height: 21px; flex: none; background: #232323; display: flex; align-items: center; padding-left: 10px; margin-bottom: 3px; }
.tool { width: 21px; height: 19px; display: flex; align-items: center; justify-content: center; color: #585858; }
.tool svg { width: 14px; height: 14px; }
.tool.on { background: #1b1b1b; color: #24466b; }
.tool.dim { color: #3c3c3c; width: 19px; }
.tool.axis { margin-left: 14px; background: #1b2126; color: #1c3a58; width: 19px; }
.tool.snap { margin-left: 19px; }
.tool.blue { color: #1c3044; }
.sep { width: 1px; height: 17px; background: #363636; margin: 0 2px; }
.sep.far { margin-left: 21px; }
.sep.wide { margin: 0 6px; }
.check { display: flex; align-items: center; gap: 4px; }
.check input { appearance: none; width: 11px; height: 11px; border: 2px solid #4a4a4a; border-radius: 2px; }
.workspaces { margin-left: auto; display: flex; align-items: center; height: 100%; border-left: 1px solid #1b1b1b; padding: 0 4px 0 20px; color: #888; }
.workspaces button { display: flex; align-items: center; margin-right: 38px; gap: 8px; }
.workspaces .cur { color: #2d7cc8; margin-right: 20px; }
.workspaces .cur svg { color: #1f4a75; }
.workspaces .morebtn { color: #555; margin: 0 11px 0 -5px; }
.wsicon { width: 16px; height: 11px; color: #404040; margin-right: 10px; }
.helpsearch { width: 162px; height: 17px; background: #282828; display: flex; align-items: center; gap: 10px; padding-left: 4px; }
.helpsearch input { width: 120px; font-size: 10px; }
::placeholder { color: #505050; opacity: 1; }

.work { flex: 1; min-height: 0; display: grid; grid-template-rows: 508fr 295fr; gap: 3px; }
.upper { display: flex; gap: 3px; min-height: 0; }
.lower { display: flex; gap: 3px; min-height: 0; }
.panel { background: #232323; display: flex; flex-direction: column; min-width: 0; }
.tabs { display: flex; height: 25px; flex: none; padding-left: 10px; }
.tab { display: flex; align-items: center; gap: 8px; padding: 0 2px; height: 22px; }
.tab.active { border-bottom: 2px solid #484848; padding-top: 2px; }
.tab em { color: #2d7cc8; }
.tab b { color: #aaa; font-weight: 400; font-size: 10px; }
.sw { width: 9px; height: 9px; flex: none; display: block; }
.red { background: #a33333; }
.tan { background: #a8946c; }
.yellow { background: #ddd048; }

.project { width: 268px; flex: none; }
.fx { margin-left: 26px; }
.space { flex: 0 1 91px; }
.search { height: 16px; background: #282828; display: flex; align-items: center; padding-left: 6px; }
.search input { flex: 1; min-width: 0; height: 14px; }
.ld { width: 14px; height: 11px; }
.project .search { margin: 0 5px 6px 6px; }
.ptable { border-collapse: collapse; table-layout: fixed; width: calc(100% - 2px); margin-left: 1px; color: #909090; font-size: 9px; }
.ptable .c1 { width: 14px; }
.ptable .c2 { width: 186px; }
.ptable .c3 { width: 19px; }
.ptable th { height: 16px; background: #333; color: #aaa; font-size: 11px; font-weight: 400; text-align: left; padding: 0; border-top: 1px solid #111; border-bottom: 1px solid #111; }
.ptable th + th { border-left: 1px solid #222; }
.ptable th svg { margin-left: 3px; }
.ptable th + th { padding-left: 5px; }
.ptable th:nth-child(3) { padding-left: 0; }
.ptable td { height: 16px; padding: 0; border-bottom: 1px solid #1e1e1e; line-height: 12px; }
.ptable td:first-child svg { margin-left: 4px; }
.ptable td:last-child { padding-left: 5px; }
.ptable td .sw { margin-left: 4px; }
.between { display: flex; justify-content: space-between; align-items: center; padding-right: 2px; }
.sortarrow { width: 12px; height: 6px; }
.nm { display: flex; align-items: center; gap: 4px; }
.pi { width: 13px; height: 11px; color: #aaa; }
.pfoot { margin-top: auto; height: 15px; border-top: 1px solid #111; display: flex; align-items: center; gap: 7px; padding-left: 4px; color: #aaa; font-size: 9px; }
.pfoot svg { width: 14px; height: 11px; }
.bpc { width: 40px; height: 13px; background: #1b1b1b; line-height: 12px; font-size: 8px; margin: 0 -2px; }

.viewer { flex: 1; }
.viewer .tabs { padding-left: 9px; }
.tab.comp { gap: 7px; padding: 2px 3px 0 0; }
.t2 { margin-left: 27px; }
.t3 { margin-left: 53px; }
.crumbs { height: 19px; flex: none; padding-left: 16px; border-bottom: 1px solid #0c0c0c; }
.crumbs button { width: 56px; height: 15px; border: 1px solid #2b2b2b; text-align: left; padding-left: 8px; line-height: 12px; color: #2d7cc8; }
.stage { flex: 1; display: flex; align-items: center; justify-content: center; border-top: 1px solid #303030; min-height: 0; }
.canvas { width: 800px; height: 100%; background: #fff; }
.handle { width: 6px; height: 6px; background: #a83232; margin: 0 -3px; z-index: 1; }
.vfoot { height: 20px; flex: none; display: flex; align-items: center; gap: 6px; padding-left: 4px; color: #424242; font-size: 10px; }
.dd { display: flex; align-items: center; justify-content: space-between; background: #272727; padding: 0 6px; height: 14px; }
.z { width: 54px; padding-left: 3px; }
.q { width: 70px; font-size: 11px; }
.maskbtn { width: 18px; background: #1b2024; color: #1c3a58; padding: 1px 3px; }
.tc { padding: 0 9px 0 7px; }

.side { width: 173px; flex: none; display: flex; flex-direction: column; gap: 4px; }
.info { height: 122px; }
.info .tab + .tab { margin-left: 16px; }
.inforow { display: flex; height: 53px; font-size: 9px; line-height: 11px; border-bottom: 1px solid #363636; margin: 0 4px; padding-left: 3px; }
.bigsw { width: 17px; height: 17px; background: #fff; border: 1px solid #000; margin: 12px 5px 0 0; }
.inforow dl { display: grid; grid-template-columns: 15px auto; align-content: start; margin-top: 2px; }
.rgba { width: 57px; height: 44px; border-right: 1px solid #363636; }
.plus { font-size: 14px; padding: 19px 4px 0 7px; }
.inforow .xy { grid-template-columns: 13px auto; margin-top: 1px; }
.infotext { padding: 1px 6px; font-size: 10px; line-height: 12px; }
.preview { height: 46px; }
.transport { display: flex; padding-left: 34px; }
.transport button { width: 20px; display: flex; justify-content: center; }
.transport svg { width: 11px; height: 11px; fill: #424242; margin-top: 3px; }
.character { flex: 1; border: 1px solid #2a609a; color: #4c4c4c; }
.ctabs { display: flex; height: 27px; padding-top: 3px; }
.ctabs .lib { margin-left: 34px; }
.ctabs .act { margin-left: 34px; height: 18px; border-bottom: 1px solid #4c4c4c; display: flex; gap: 9px; padding: 0 0 0 2px; }
.ctabs .act svg { margin-top: 4px; }
.ctabs > svg { margin: 1px 3px 0 auto; }
.fontbox { display: flex; gap: 4px; padding-left: 4px; height: 42px; }
.fsel { width: 102px; display: grid; gap: 2px; align-content: start; padding-top: 1px; }
.sel { display: flex; align-items: center; background: #292929; height: 17px; padding-right: 4px; min-width: 0; }
.sel select { flex: 1; min-width: 0; height: 17px; padding-left: 6px; line-height: 14px; }
.mid { display: flex; flex-direction: column; gap: 6px; padding-top: 4px; }
.bw { width: 16px; height: 13px; background: linear-gradient(#181818 50%, #585858 50%); border: 1px solid #383838; }
.fillstroke { width: 38px; height: 38px; }
.crow { display: grid; grid-template-columns: 16px 49px 8px 14px 16px 1fr 8px; align-items: center; margin: 0 4px; height: 19px; padding-bottom: 5px; }
.crow span { padding-left: 4px; white-space: nowrap; }
.crow > :nth-child(4) { grid-column: 5; }
.crow.l { border-top: 2px solid #303030; height: 23px; padding-bottom: 2px; }
.crow.w > :nth-child(4) { grid-column: 4 / 8; }
.crow.w { height: 26px; }
.g { font: 700 13px/14px "Liberation Serif", serif; white-space: nowrap; }
.g.s { font-size: 11px; }
.g.s sup { font-size: 8px; line-height: 8px; }
.g.u { text-decoration: underline; }
.g.inv { background: #484848; color: #232323; font-size: 11px; line-height: 11px; text-align: center; }
.styles { border-top: 2px solid #303030; display: flex; margin: 0 4px; padding: 4px 0 0 18px; gap: 8px; height: 26px; font: 12px/14px "Liberation Serif", serif; }
.styles button { min-width: 15px; }
.styles i { font-style: italic; }
.styles .bd { font-weight: 700; }
.styles sup, .styles sub { font-size: 7px; line-height: 7px; }
.opts { display: grid; grid-template-columns: 81px 1fr; padding: 2px 0 0 9px; }

.timeline { flex: 1; flex-direction: row; }
.layers { width: 969px; flex: none; display: flex; flex-direction: column; border-right: 1px solid #111; }
.rq { margin-left: 29px; }
.timerow { display: flex; height: 28px; flex: none; }
.time { width: 105px; display: flex; flex-direction: column; align-items: center; color: #1f4a78; }
.time strong { font: 700 16px/15px "Liberation Serif", serif; color: #2d84dc; }
.time small { font-size: 8px; line-height: 11px; white-space: nowrap; }
.timerow .search { flex: 1; margin-top: 5px; }
.tlbtns { width: 168px; display: flex; align-items: center; gap: 13px; padding: 3px 0 0 17px; color: #999; }
.tlbtns svg { width: 12px; height: 12px; }
.lgrid { display: grid; grid-template-columns: 58px 27px 28px 222px 62px 19px 58px 157px 97px 59px 58px 58px 51px 1fr; height: 16px; flex: none; align-items: center; }
.lhead { background: #333; border-top: 1px solid #111; color: #aaa; }
.lhead > span { border-left: 1px solid #1c1c1c; padding-left: 5px; height: 13px; line-height: 13px; white-space: nowrap; }
.lhead > .sws:first-child, .lhead > .t, .lhead > .t + span { border-color: transparent; }
.lgrid .sws { display: flex; align-items: center; padding-left: 4px; gap: 1px; }
.lhead .sws, .lrow .sws { height: 13px; }
.lgrid .sws svg, .lgrid .sws i { width: 12px; height: 12px; flex: none; }
.lgrid .sws svg { padding: 1px; color: #bbb; }
.lgrid .sws:nth-child(8) { padding-left: 3px; }
.lhead .fxi { font: italic 11px/12px "Liberation Serif", serif; }
.lhead .tg { padding-left: 10px; }
.lrow { background: #454545; border-top: 1px solid #111; color: #aaa; }
.lgrid .dk { background: #363636; }
.tg2 { display: flex; align-items: center; gap: 3px; padding-left: 3px; }
.redbox { width: 13px; height: 14px; background: #b03234; flex: none; }
.lgrid .no { padding-left: 4px; }
.lhead .src { padding-left: 4px; }
.lname { display: flex; align-items: center; gap: 3px; padding-left: 2px; }
.lname i { width: 12px; height: 14px; background: #fff; }
.lname b { flex: 1; height: 15px; background: #9a9a9a; color: #222; font-size: 9px; line-height: 15px; padding-left: 4px; }
.lrow .sel { background: #222; height: 15px; color: #aaa; }
.lrow .sel.m { margin: 0 0 0 3px; }
.lrow .t .dk { display: block; width: 11px; height: 12px; margin-left: 2px; }
.par { display: flex; align-items: center; gap: 5px; padding-left: 3px; }
.par .sel { width: 74px; }
.v { color: #2d6fb4; font: 8px/14px "DejaVu Sans Mono", monospace; padding-left: 7px; }
.lhead .t { padding-left: 6px; font-size: 10px; }
.lhead .t + span { padding-left: 1px; font-size: 10px; }
.grow { flex: 1; }
.lfoot { height: 15px; border-top: 1px solid #111; display: flex; align-items: center; gap: 4px; padding-left: 6px; }
.lfoot svg { width: 11px; height: 11px; fill: none; stroke: #2464a4; stroke-width: 1.500; }
.graph { flex: 1; display: flex; flex-direction: column; position: relative; padding-left: 5px; padding-top: 29px; background: #232323; }
.navbar { height: 6px; background: #666; border-right: 5px solid #2f86d8; border-radius: 0 4px 4px 0; }
.ruler { list-style: none; display: grid; grid-template-columns: repeat(9, 5fr) 1fr; height: 17px; margin-right: 6px; font: 8px/14px "DejaVu Sans Mono", monospace; color: #999; }
.ruler li { border-left: 1px solid transparent; border-image: linear-gradient(transparent 13px, #888 13px) 1; }
.ruler span { width: 0; display: flex; justify-content: center; }
.workarea { height: 13px; background: #606060; border: solid #2f86d8; border-width: 0 5px; border-radius: 4px; margin-left: -5px; }
.cache { height: 3px; background: #28a838; margin: 2px 6px 2px 0; }
.track { height: 15px; background: #484848; padding-right: 6px; }
.track i { display: block; height: 14px; background: #a84548; border-top: 1px solid #b87878; }
.tbody { flex: 1; margin-right: 6px; background: #323232; }
.zoomrow { height: 15px; padding-top: 3px; }
.zoomrow svg { width: 84px; height: 10px; }
.playhead { position: absolute; left: 0; top: 41px; width: 10px; height: 11px; }
.graph::after { content: ""; position: absolute; left: 5px; top: 51px; bottom: 15px; width: 1px; background: #2f86d8; }
.edge { width: 15px; display: flex; flex-direction: column; align-items: center; gap: 6px; padding-top: 54px; }
.edge svg { width: 11px; height: 12px; }

.paragraph { width: 256px; flex: none; color: #444; }
.aligns { display: flex; margin: 0 0 0 5px; padding: 1px 0 5px; width: 155px; border-bottom: 1px solid #363636; }
.aligns button { width: 21px; height: 19px; display: flex; align-items: center; justify-content: center; }
.aligns .gap { margin-left: 5px; }
.aligns svg { width: 12px; height: 12px; }
.aligns .on { background: #1b2630; color: #24466b; }
.indents { display: grid; grid-template-columns: 61px 55px 60px; padding: 0 0 0 6px; }
.indents span { display: flex; align-items: center; gap: 4px; height: 15px; white-space: nowrap; }
.indents svg { width: 11px; height: 11px; }
.dir b { background: #1b2630; color: #1d426a; padding: 2px 3px; }

.taskbar { height: 34px; flex: none; background: #1c2725; display: flex; border-top: 1px solid #151515; }
.taskbar > button { width: 41px; display: flex; align-items: center; justify-content: center; border-bottom: 2px solid transparent; }
.taskbar > button:first-child { width: 39px; }
.taskbar > button svg { width: 15px; height: 15px; }
.taskbar > button svg.lg { width: 19px; height: 19px; }
.taskbar .run { border-image: linear-gradient(90deg, transparent 4px, #76a9da 4px, #76a9da 37px, transparent 37px) 2; }
.taskbar .cur { background: #4b5453; }
.tray { margin-left: auto; display: flex; align-items: center; gap: 6px; margin-right: 15px; color: #fff; }
.tray svg { width: 14px; height: 14px; }
.tray .ink { margin-left: 3px; }
.ime { margin: 0 7px 0 3px; }
.tray time { font-size: 10px; line-height: 16px; text-align: center; margin-right: 13px; }
.tray .note { width: 20px; height: 20px; }

.annotation { position: absolute; left: 1127px; top: 489px; font: 80px/94px Roboto, sans-serif; color: #f00; }
.ime-pill { position: absolute; right: 236px; bottom: 65px; width: 100px; height: 51px; }
.watermark { position: absolute; right: 84px; bottom: 30px; width: 292px; height: 145px; }
.wl { font: 700 65px "Liberation Sans", sans-serif; }
.wc { font: 900 48px "Noto Sans CJK SC", sans-serif; }
.wu { font: 500 32px "Noto Sans", sans-serif; }
.wd { font: 700 44px "Liberation Sans", sans-serif; fill: #333; }
.meter { position: absolute; right: 0; bottom: 40px; width: 7px; height: 48px; background: #1e2846; border: 1px solid #3a4664; border-radius: 4px 0 0 4px; padding: 23px 0 3px 1px; }
.meter::before { content: ""; display: block; width: 4px; height: 100%; background: repeating-linear-gradient(#62b49a 0 2px, #1e2846 2px 3px); }
.peek { position: absolute; right: 0; top: 222px; width: 4px; height: 53px; background: linear-gradient(#a8d0a8 18px, #444 18px 26px, #a8d0a8 26px 46px, #444 46px); }

.dialog { position: absolute; left: 50%; top: 250px; width: 365px; transform: translateX(-50%); background: #232323; color: #888; border: 1px solid #555; border-color: #777 #333 #232323; box-shadow: 0 3px 10px rgba(0, 0, 0, .5); }
.dtitle { background: #fff; height: 25px; display: flex; align-items: center; justify-content: space-between; padding: 0 8px 2px 7px; }
.dtitle h2 { font-size: 10px; font-weight: 400; color: #222; }
.dtitle svg { width: 9px; height: 9px; stroke: #333; fill: none; }
.dbody { padding: 12px 12px; }
.drow { display: flex; align-items: center; height: 25px; }
.drow label { width: 71px; text-align: right; margin-right: 6px; white-space: nowrap; }
.name { height: 17px; }
.name label { width: 75px; }
.inp { width: 208px; height: 17px; background: #e6e6e6; border: 1px solid #2d7cc8; border-radius: 2px; padding-left: 4px; display: flex; }
.inp input { flex: 1; min-width: 0; color: #222; font-size: 10px; }
.inp input::selection { background: #0f78d4; color: #fff; }
.size, .color { border: 1px solid #2e2e2e; min-width: 0; }
fieldset legend { margin-left: 4px; padding: 0 4px; line-height: 14px; }
.size { margin-top: 5px; height: 198px; }
.dims { display: flex; align-items: center; }
.num { width: 23px; color: #2d7cc8; font-size: 9px; }
.dialog small { font-size: 9px; }
.lockr { margin-left: 38px; font-size: 10px; gap: 3px; white-space: nowrap; }
.check input { flex: none; }
.dialog .check input { border-color: #777; }
.dialog .sel { background: #1f1f1f; border: 1px solid #2d2d2d; color: #bbb; height: 17px; }
.dialog .sel select { height: 15px; padding-left: 5px; }
.dialog .sel svg { color: #888; }
.s1 { width: 79px; }
.s2 { width: 170px; }
.sum { display: grid; grid-template-columns: 77px 1fr; font-size: 10px; line-height: 12px; padding-top: 8px; }
.sum dt { text-align: right; white-space: nowrap; }
.pill { height: 17px; border: 1px solid #777; border-radius: 9px; width: 75px; line-height: 14px; }
.mk { display: block; width: 86px; margin: 11px auto 0; }
.color { margin-top: 5px; height: 50px; display: flex; justify-content: center; }
.csw { width: 34px; height: 20px; background: #fff; border: 2px solid #666; margin: 4px 9px 0 7px; }
.pick { width: 18px; height: 18px; background: #1b1b1b; margin-top: 5px; padding: 3px; color: #aaa; }
.dfoot { display: flex; gap: 8px; margin-top: 17px; }
.off { color: #444; margin-right: auto; }
.dialog .off input { border-color: #4a4a4a; }
.ok { border-color: #ccc; color: #ddd; }
```
